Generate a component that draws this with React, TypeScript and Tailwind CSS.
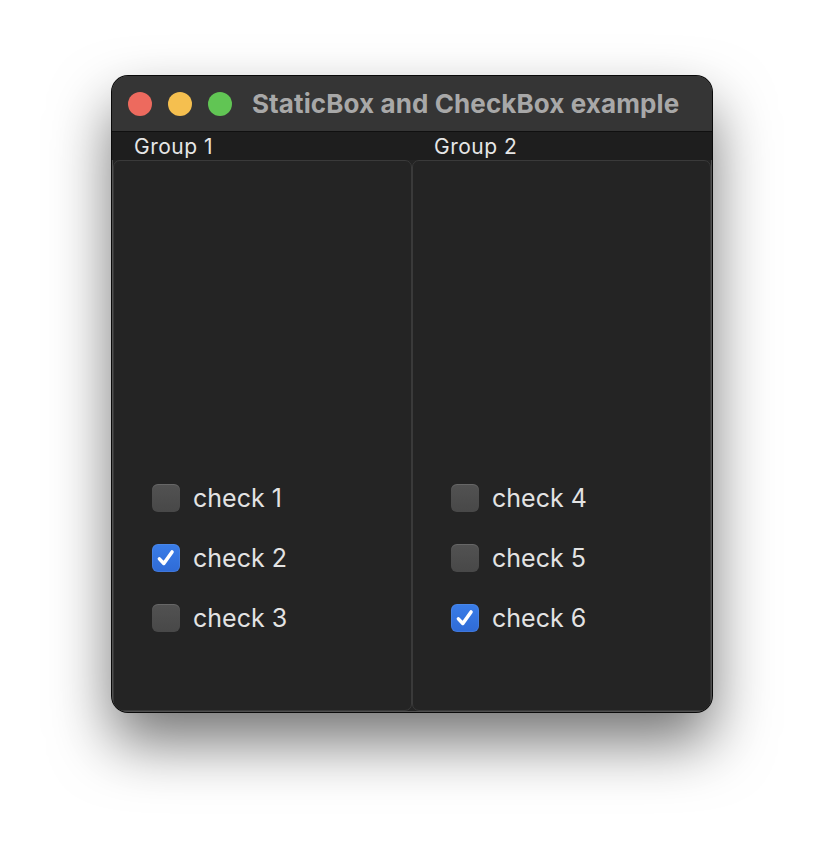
import React from "react";

function Check({ label, checked }: { label: string; checked?: boolean }) {
  return (
    <div className="flex items-center h-[28px]">
      {checked ? (
        <div className="w-[28px] h-[28px] rounded-[6px] bg-gradient-to-b from-[#3a7de8] to-[#2f6bd6] flex items-center justify-center shadow-[inset_0_0_0_1px_rgba(255,255,255,0.08)]">
          <svg width="22" height="22" viewBox="0 0 20 20">
            <path d="M4 10.8 L8 15 L15.5 4.5" fill="none" stroke="#ffffff" strokeWidth="3.2" strokeLinecap="round" strokeLinejoin="round" />
          </svg>
        </div>
      ) : (
        <div className="w-[28px] h-[28px] rounded-[6px] bg-gradient-to-b from-[#525252] to-[#484848] shadow-[inset_0_1px_0_rgba(255,255,255,0.12)]" />
      )}
      <span className="ml-[13px] text-[25px] leading-none text-[#e3e3e3] mt-[1px]">
        {label}
      </span>
    </div>
  );
}

function Box({ items }: { items: { label: string; checked?: boolean }[] }) {
  return (
    <div className="flex-1 h-full rounded-[7px] border border-[#3a3a3a] bg-[#242424] flex flex-col gap-[32px] pt-[323px] pl-[38px]">
      {items.map((it) => (
        <Check key={it.label} label={it.label} checked={it.checked} />
      ))}
    </div>
  );
}

export default function App() {
  return (
    <div className="w-[824px] h-[860px] bg-white pt-[76px] pl-[112px]" style={{ fontFamily: "Inter, 'Liberation Sans', sans-serif" }}>
      <div className="w-[600px] h-[636px] rounded-[16px] bg-[#242424] overflow-hidden flex flex-col shadow-[0_0_0_1px_#0a0a0a,inset_0_0_0_1px_#505050,0_30px_60px_rgba(0,0,0,0.55)]">
        <div className="h-[56px] bg-[#353535] flex items-center border-b border-[#101010] shrink-0">
          <div className="flex items-center gap-[16px] ml-[16px]">
            <div className="w-[24px] h-[24px] rounded-full bg-[#ed6a5e]" />
            <div className="w-[24px] h-[24px] rounded-full bg-[#f5bf4f]" />
            <div className="w-[24px] h-[24px] rounded-full bg-[#61c554]" />
          </div>
          <span className="ml-[20px] text-[26px] font-bold text-[#a8a8a8] tracking-[0.1px]">StaticBox and CheckBox example</span>
        </div>
        <div className="h-[28px] bg-[#1e1e1e] flex items-center shrink-0 text-[21px] text-[#e6e6e6] tracking-[0.5px] pt-[2px]">
          <span className="ml-[22px] w-[300px]">Group 1</span>
          <span>Group 2</span>
        </div>
        <div className="flex-1 flex px-[1px] pb-[1px]">
          <Box items={[{ label: "check 1" }, { label: "check 2", checked: true }, { label: "check 3" }]} />
          <Box items={[{ label: "check 4" }, { label: "check 5" }, { label: "check 6", checked: true }]} />
        </div>
      </div>
    </div>
  );
}
